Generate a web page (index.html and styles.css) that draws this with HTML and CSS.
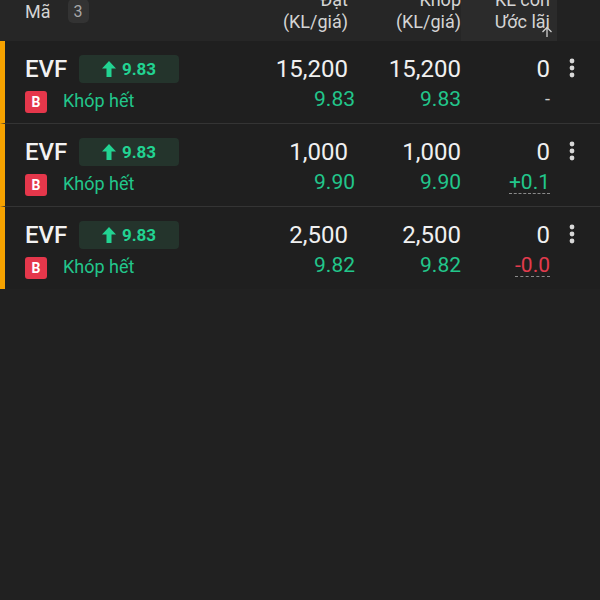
FILE: index.html
```html
<!DOCTYPE html>
<html lang="vi">
<head>
    <meta charset="UTF-8">
    <meta name="viewport" content="width=device-width, initial-scale=1.0">
    <title>Sổ lệnh</title>
    <link rel="stylesheet" href="styles.css">
</head>
<body>
    <div class="order-table">
        <!-- Header -->
        <div class="table-head">
            <div class="head-code">
                <span>Mã</span>
                <span class="count-badge">3</span>
            </div>
            <div class="head-cell">Đặt<br>(KL/giá)</div>
            <div class="head-cell">Khóp<br>(KL/giá)</div>
            <div class="head-cell sorted">
                KL còn<br>Ước lãi
                <svg class="sort-arrow" width="12" height="12" viewBox="0 0 12 12">
                    <path d="M6 11V1.5M1.5 6L6 1.5L10.5 6" fill="none" stroke="#cfcfcf" stroke-width="1.3"/>
                </svg>
            </div>
            <div class="head-cell blank"></div>
        </div>

        <!-- Row 1 -->
        <div class="order-row">
            <div class="cell-code">
                <div class="code-line">
                    <span class="ticker">EVF</span>
                    <span class="price-badge">
                        <svg width="14" height="16" viewBox="0 0 14 16"><path d="M7 0L14 7.5H9.5V16H4.5V7.5H0Z" fill="#22d392"/></svg>
                        9.83
                    </span>
                </div>
                <div class="status-line">
                    <span class="side-badge">B</span>
                    <span class="status">Khóp hết</span>
                </div>
            </div>
            <div class="cell-num">
                <div class="qty">15,200</div>
                <div class="price shifted">9.83</div>
            </div>
            <div class="cell-num">
                <div class="qty">15,200</div>
                <div class="price">9.83</div>
            </div>
            <div class="cell-num">
                <div class="qty">0</div>
                <div class="pnl none">-</div>
            </div>
            <div class="cell-menu">
                <svg width="6" height="20" viewBox="0 0 6 20"><circle cx="3" cy="3" r="2.4" fill="#d8d8d8"/><circle cx="3" cy="10" r="2.4" fill="#d8d8d8"/><circle cx="3" cy="17" r="2.4" fill="#d8d8d8"/></svg>
            </div>
        </div>

        <!-- Row 2 -->
        <div class="order-row">
            <div class="cell-code">
                <div class="code-line">
                    <span class="ticker">EVF</span>
                    <span class="price-badge">
                        <svg width="14" height="16" viewBox="0 0 14 16"><path d="M7 0L14 7.5H9.5V16H4.5V7.5H0Z" fill="#22d392"/></svg>
                        9.83
                    </span>
                </div>
                <div class="status-line">
                    <span class="side-badge">B</span>
                    <span class="status">Khóp hết</span>
                </div>
            </div>
            <div class="cell-num">
                <div class="qty">1,000</div>
                <div class="price shifted">9.90</div>
            </div>
            <div class="cell-num">
                <div class="qty">1,000</div>
                <div class="price">9.90</div>
            </div>
            <div class="cell-num">
                <div class="qty">0</div>
                <div class="pnl"><span class="pnl-value up">+0.1</span></div>
            </div>
            <div class="cell-menu">
                <svg width="6" height="20" viewBox="0 0 6 20"><circle cx="3" cy="3" r="2.4" fill="#d8d8d8"/><circle cx="3" cy="10" r="2.4" fill="#d8d8d8"/><circle cx="3" cy="17" r="2.4" fill="#d8d8d8"/></svg>
            </div>
        </div>

        <!-- Row 3 -->
        <div class="order-row">
            <div class="cell-code">
                <div class="code-line">
                    <span class="ticker">EVF</span>
                    <span class="price-badge">
                        <svg width="14" height="16" viewBox="0 0 14 16"><path d="M7 0L14 7.5H9.5V16H4.5V7.5H0Z" fill="#22d392"/></svg>
                        9.83
                    </span>
                </div>
                <div class="status-line">
                    <span class="side-badge">B</span>
                    <span class="status">Khóp hết</span>
                </div>
            </div>
            <div class="cell-num">
                <div class="qty">2,500</div>
                <div class="price shifted">9.82</div>
            </div>
            <div class="cell-num">
                <div class="qty">2,500</div>
                <div class="price">9.82</div>
            </div>
            <div class="cell-num">
                <div class="qty">0</div>
                <div class="pnl"><span class="pnl-value down">-0.0</span></div>
            </div>
            <div class="cell-menu">
                <svg width="6" height="20" viewBox="0 0 6 20"><circle cx="3" cy="3" r="2.4" fill="#d8d8d8"/><circle cx="3" cy="10" r="2.4" fill="#d8d8d8"/><circle cx="3" cy="17" r="2.4" fill="#d8d8d8"/></svg>
            </div>
        </div>
    </div>
</body>
</html>
```

FILE: styles.css
```css
body {
    font-family: Roboto, 'Noto Sans', sans-serif;
    margin: 0;
    padding: 0;
    background-color: #212121;
    color: #ececec;
}
.order-table {
    width: 600px;
}
.table-head {
    height: 41px;
    overflow: hidden;
    display: grid;
    grid-template-columns: 1fr 110px 113px 96px 43px;
    grid-template-rows: 41px;
    padding-left: 25px;
    background-color: #262626;
}
.head-code {
    display: flex;
    align-items: center;
    gap: 17px;
    height: 24px;
    margin-top: -1px;
    font-size: 18px;
    color: #d4d4d4;
}
.count-badge {
    width: 21px;
    height: 24px;
    border-radius: 5px;
    background-color: #333333;
    display: flex;
    justify-content: center;
    align-items: center;
    font-size: 16px;
    color: #a8a8a8;
}
.head-cell {
    position: relative;
    align-self: end;
    text-align: right;
    font-size: 18px;
    line-height: 22px;
    color: #d4d4d4;
    padding-bottom: 8px;
    white-space: nowrap;
}
.head-cell.sorted {
    align-self: stretch;
    display: flex;
    flex-direction: column;
    justify-content: flex-end;
    padding-right: 7px;
    background-color: #2b2b2b;
}
.head-cell.blank {
    align-self: stretch;
    background-color: #222222;
}
.sort-arrow {
    position: absolute;
    right: 4px;
    bottom: 3px;
}
.order-row {
    display: grid;
    grid-template-columns: 1fr 110px 113px 96px 43px;
    height: 82px;
    padding-left: 20px;
    border-left: 5px solid #f6a200;
    border-bottom: 1px solid #343434;
    background-color: #1f1f1f;
}
.order-row:last-child {
    border-bottom: none;
}
.cell-code {
    padding-top: 14px;
}
.code-line {
    display: flex;
    align-items: center;
    height: 28px;
}
.ticker {
    width: 54px;
    font-size: 24px;
    font-weight: 500;
    color: #f2f2f2;
}
.price-badge {
    width: 100px;
    height: 28px;
    border-radius: 4px;
    background-color: #24342c;
    display: flex;
    justify-content: center;
    align-items: center;
    gap: 6px;
    font-size: 17px;
    font-weight: 700;
    color: #22d392;
}
.status-line {
    display: flex;
    align-items: center;
    height: 22px;
    margin-top: 8px;
}
.side-badge {
    width: 22px;
    height: 22px;
    border-radius: 3px;
    background-color: #e5374b;
    display: flex;
    justify-content: center;
    align-items: center;
    font-size: 14px;
    font-weight: 700;
    color: #ffffff;
}
.status {
    margin-left: 16px;
    font-size: 18px;
    color: #22c68b;
    margin-top: -3px;
}
.cell-num {
    padding-top: 14px;
    display: flex;
    flex-direction: column;
    align-items: flex-end;
}
.cell-num:nth-child(4) {
    padding-right: 7px;
}
.qty {
    height: 28px;
    line-height: 28px;
    font-size: 24px;
    color: #f0f0f0;
}
.price {
    margin-top: 5px;
    height: 22px;
    line-height: 22px;
    font-size: 21px;
    color: #22c68b;
}
.price.shifted {
    margin-right: -7px;
}
.pnl {
    margin-top: 5px;
    height: 22px;
    line-height: 22px;
    font-size: 21px;
}
.pnl.none {
    font-size: 18px;
    color: #cccccc;
}
.pnl-value {
    display: inline-block;
    border-bottom: 1px dashed #8a8a8a;
}
.pnl-value.up {
    color: #22c68b;
}
.pnl-value.down {
    color: #e23b4d;
}
.cell-menu {
    padding-top: 17px;
    padding-left: 12px;
}
```
